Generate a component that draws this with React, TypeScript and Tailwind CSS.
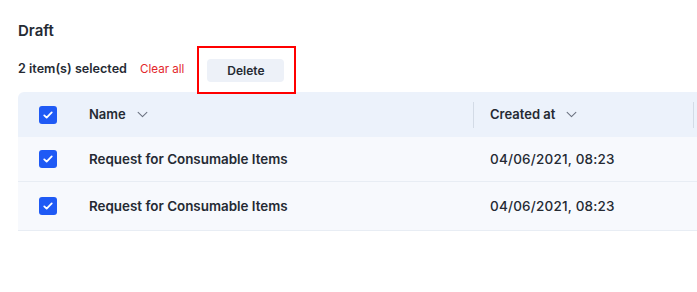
import React from "react";

type Row = { name: string; createdAt: string };

const rows: Row[] = [
  { name: "Request for Consumable Items", createdAt: "04/06/2021, 08:23" },
  { name: "Request for Consumable Items", createdAt: "04/06/2021, 08:23" },
];

function Check() {
  return (
    <span className="flex h-[18px] w-[18px] items-center justify-center rounded-[3px] bg-[#1f5af5]">
      <svg viewBox="0 0 16 16" className="h-3 w-3" fill="none" stroke="white" strokeWidth={2.4}>
        <path strokeLinecap="round" strokeLinejoin="round" d="M3 8.5l3.2 3L13 4.5" />
      </svg>
    </span>
  );
}

function Chevron() {
  return (
    <svg viewBox="0 0 12 8" className="h-[7px] w-[11px]" fill="none" stroke="#6b7280" strokeWidth={1.2}>
      <path strokeLinecap="round" strokeLinejoin="round" d="M1 1.5l5 5 5-5" />
    </svg>
  );
}

export default function App() {
  return (
    <div className="h-[292px] w-[697px] overflow-hidden bg-white pl-[18px] pt-[21px] font-['Inter',sans-serif] text-[#252a33]">
      <h1 className="text-[15px] font-semibold leading-[20px]">Draft</h1>

      <div className="mt-[17px] flex h-[23px] items-center">
        <span className="text-[12.6px] font-semibold">2 item(s) selected</span>
        <button className="ml-[13px] text-[11.6px] text-[#e3262b]">Clear all</button>
        <div className="relative ml-[23px]">
          <button className="h-[23px] w-[77px] rounded-[4px] bg-[#edf1f8] text-[12px] font-semibold">
            Delete
          </button>
          <div className="pointer-events-none absolute -top-[11px] -bottom-[12px] -left-[10px] -right-[12px] border-2 border-[#f00]" />
        </div>
      </div>

      <div className="mt-[11px] w-[720px]">
        <div className="flex h-[45px] items-center rounded-tl-[6px] bg-[#ecf2fb] text-[13px] font-semibold">
          <div className="flex w-[71px] pl-[21px]">
            <Check />
          </div>
          <div className="flex w-[384px] items-center gap-[11px]">
            Name
            <Chevron />
          </div>
          <div className="h-[26px] w-px bg-[#d3dbe6]" />
          <div className="flex w-[219px] items-center gap-[11px] pl-[16px]">
            Created at
            <Chevron />
          </div>
          <div className="h-[26px] w-px bg-[#d3dbe6]" />
        </div>
        {rows.map((r, i) => (
          <div
            key={i}
            className={`flex items-center border-b border-[#e8edf4] bg-[#f7f9fd] ${
              i === 0 ? "h-[45px]" : "h-[49px]"
            }`}
          >
            <div className="flex w-[71px] pl-[21px]">
              <Check />
            </div>
            <div className="w-[385px] text-[13.4px] font-semibold">{r.name}</div>
            <div className="pl-[16px] text-[13.5px] font-medium tracking-[0.2px]">{r.createdAt}</div>
          </div>
        ))}
      </div>
    </div>
  );
}
